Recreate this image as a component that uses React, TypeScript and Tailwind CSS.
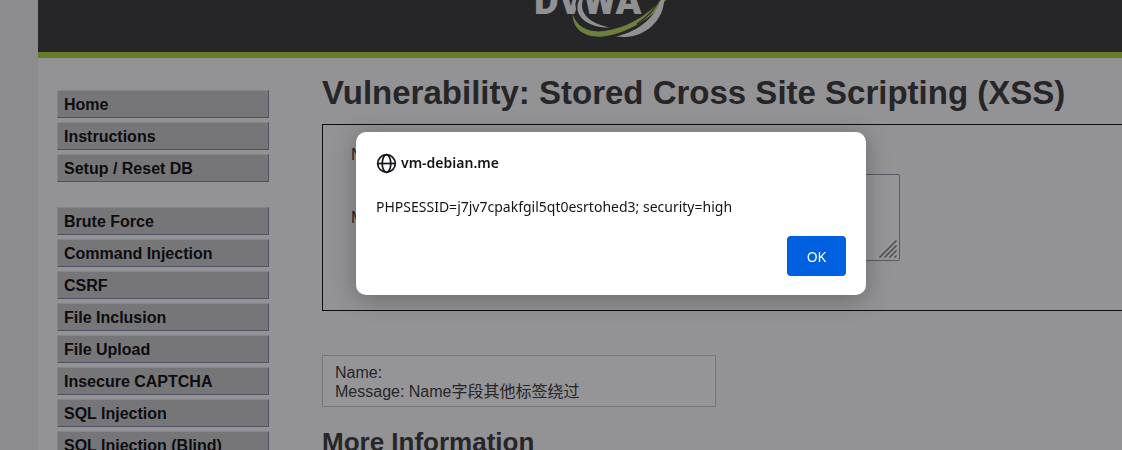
import { FormEvent, useState } from 'react';

const MENU_GROUPS = [
  ['Home', 'Instructions', 'Setup / Reset DB'],
  [
    'Brute Force',
    'Command Injection',
    'CSRF',
    'File Inclusion',
    'File Upload',
    'Insecure CAPTCHA',
    'SQL Injection',
    'SQL Injection (Blind)',
  ],
];

export default function App() {
  const [alertOpen, setAlertOpen] = useState(true);

  return (
    <div className="h-screen overflow-hidden bg-[#e7e7e7] pl-[38px] font-['Liberation_Sans','Noto_Sans_CJK_SC',sans-serif] text-base text-[#2f2f2f]">
      <div className="min-h-full bg-[#f4f4f4]">
        <header className="flex h-[58px] justify-center border-b-6 border-[#a1cc33] bg-[#2f2f2f] pl-10">
          <Logo />
        </header>

        <div className="flex">
          <MainMenu />
          <main className="min-w-0 flex-1 pt-4 pl-[53px]">
            <h1 className="text-[33px] leading-[38px] font-bold whitespace-nowrap">
              Vulnerability: Stored Cross Site Scripting (XSS)
            </h1>
            <GuestbookForm />
            <div className="mt-11 w-[394px] border border-[#c0c0c0] bg-[#f8f8f8] px-3 pt-[7px] pb-[5px] leading-[19px]">
              <p>Name:</p>
              <p>Message: Name字段其他标签绕过</p>
            </div>
            <h2 className="mt-5 text-[26px] leading-[30px] font-bold">More Information</h2>
          </main>
        </div>
      </div>

      {alertOpen && (
        <AlertDialog
          host="vm-debian.me"
          message="PHPSESSID=j7jv7cpakfgil5qt0esrtohed3; security=high"
          onClose={() => setAlertOpen(false)}
        />
      )}
    </div>
  );
}

function MainMenu() {
  return (
    <nav className="flex w-[231px] shrink-0 flex-col gap-[25px] pt-8 pl-[19px]">
      {MENU_GROUPS.map((group) => (
        <ul key={group[0]} className="flex flex-col gap-1">
          {group.map((label) => (
            <li key={label}>
              <a
                href="#"
                className="block h-7 border border-t-[#dcdcdc] border-r-[#7a7f9e] border-b-[#7a7f9e] border-l-[#dcdcdc] bg-[#c0c0c0] px-1.5 leading-7 font-bold text-black"
              >
                {label}
              </a>
            </li>
          ))}
        </ul>
      ))}
    </nav>
  );
}

function GuestbookForm() {
  const handleSubmit = (e: FormEvent) => e.preventDefault();

  return (
    <form
      onSubmit={handleSubmit}
      className="mt-3 -mr-1 h-[187px] border border-black pt-5 pl-7"
    >
      <div className="flex h-[29px]">
        <label htmlFor="name" className="w-[101px] leading-5">
          Name *
        </label>
        <input id="name" className="h-6 w-[240px] border border-[#8f8f9d] bg-white" />
      </div>
      <div className="flex items-center">
        <label htmlFor="message" className="w-[101px]">
          Message *
        </label>
        <div className="relative">
          <textarea
            id="message"
            className="block h-[87px] w-[448px] resize-none rounded-xs border border-[#8f8f9d] bg-[#fafafa]"
          />
          <svg
            className="pointer-events-none absolute right-[3px] bottom-[3px]"
            width="18"
            height="18"
            viewBox="0 0 18 18"
            stroke="#6b6b6b"
            strokeWidth="1.4"
          >
            <path d="M.5 17.5l17-17M5.5 17.5l12-12M10.5 17.5l7-7M15.5 17.5l2-2" />
          </svg>
        </div>
      </div>
    </form>
  );
}

function AlertDialog({
  host,
  message,
  onClose,
}: {
  host: string;
  message: string;
  onClose: () => void;
}) {
  return (
    <div className="fixed inset-0 flex items-start justify-center bg-[rgba(28,27,34,0.45)] pt-[132px] pl-[100px]">
      <div
        role="alertdialog"
        aria-modal="true"
        aria-labelledby="alert-host"
        className="flex w-[510px] flex-col rounded-[10px] bg-white px-5 pt-[21px] pb-[19px] font-['Noto_Sans',sans-serif] text-sm text-[#15141a] shadow-[0_4px_24px_rgba(0,0,0,0.3)]"
      >
        <div id="alert-host" className="flex h-5 items-center gap-1 leading-5 font-semibold">
          <GlobeIcon />
          {host}
        </div>
        <p className="mt-6 leading-5">{message}</p>
        <button
          type="button"
          onClick={onClose}
          className="mt-[19px] h-10 w-[59px] self-end rounded-sm bg-[#0061e0] pt-px text-white"
        >
          OK
        </button>
      </div>
    </div>
  );
}

function GlobeIcon() {
  return (
    <svg
      width="21"
      height="21"
      viewBox="0 0 21 21"
      fill="none"
      stroke="currentColor"
      strokeWidth="1.7"
      aria-hidden="true"
    >
      <circle cx="10.5" cy="10.5" r="8.8" />
      <ellipse cx="10.5" cy="10.5" rx="4.3" ry="8.8" />
      <path d="M1.7 10.5h17.6" />
    </svg>
  );
}

function Logo() {
  return (
    <svg width="140" height="42" viewBox="530 0 140 42" aria-label="DVWA">
      <text
        x="534"
        y="14"
        fill="#f0f0f0"
        fontSize="38"
        fontWeight="900"
        fontFamily="Roboto, sans-serif"
      >
        DVWA
      </text>
      {/* dark edge separates the rings from the letters */}
      <path d="M579 -2C573 8 581 22 600 27" fill="none" stroke="#2f2f2f" strokeWidth="3" />
      <path
        d="M572.5 14C573 31 587 38 603 36.500C630 33 655 16 669 -4L664 -4C650 14 628 28 604 31C588 33 577 27 572.500 14Z"
        fill="#b2d455"
      />
      <path
        d="M581 -3C571 11 582 28 611 27.500C594 25 576 15 584 -3Z"
        fill="#f0f0f0"
      />
      <path
        d="M616 36.500C640 31 656 16 661.500 -2L664 -2C665 18 647 37 624 37Z"
        fill="#f0f0f0"
      />
      <path
        d="M637 24C650 15 657 7 660.500 -3"
        fill="none"
        stroke="#2f2f2f"
        strokeWidth="1.2"
      />
    </svg>
  );
}
